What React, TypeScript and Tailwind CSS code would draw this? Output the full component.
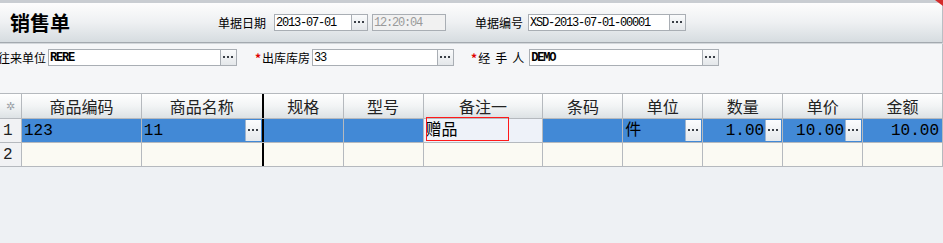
import React from 'react';

const cjk = "font-['Noto_Sans_CJK_SC',sans-serif]";
const mono = "font-['Liberation_Mono','Noto_Sans_CJK_SC',monospace]";

const Dots: React.FC = () => (
  <svg width="11" height="3" viewBox="0 0 11 3">
    <rect x="0" y="0" width="2" height="2" fill="#3a3f46" />
    <rect x="4" y="0" width="2" height="2" fill="#3a3f46" />
    <rect x="8" y="0" width="2" height="2" fill="#3a3f46" />
  </svg>
);

const PickButton: React.FC = () => (
  <div className="-ml-px flex h-[17px] w-[17px] items-center justify-center border border-[#a9aeb4] bg-gradient-to-b from-[#fafbfc] to-[#e4e7ea]">
    <Dots />
  </div>
);

const Field: React.FC<{ value: string; width: string; bold?: boolean; button?: boolean; gray?: boolean }> = ({
  value,
  width,
  bold,
  button = true,
  gray,
}) => (
  <div className="flex items-center">
    <div
      className={`flex h-[17px] items-center overflow-hidden whitespace-nowrap border border-[#a9aeb4] px-[1px] text-[12px] ${width} ${
        gray ? 'bg-[#f1f1f1] text-[#9a9a9a]' : 'bg-white text-black'
      } ${bold ? 'font-bold' : ''} ${mono} tracking-[-1.2px]`}
    >
      {value}
    </div>
    {button && <PickButton />}
  </div>
);

const Label: React.FC<{ text: string; required?: boolean; className?: string }> = ({ text, required, className = '' }) => (
  <div className={`flex items-center whitespace-pre text-[12px] text-black ${cjk} ${className}`}>
    {required && <span className="mr-[1px] text-[12px] font-bold text-[#e00000]">*</span>}
    {text}
  </div>
);

type Col = { title: string; w: string; right?: string };

const cols: Col[] = [
  { title: '商品编码', w: 'w-[120px]' },
  { title: '商品名称', w: 'w-[122px]', right: 'border-r-2 border-r-black' },
  { title: '规格', w: 'w-[80px]' },
  { title: '型号', w: 'w-[80px]' },
  { title: '备注一', w: 'w-[120px]' },
  { title: '条码', w: 'w-[80px]' },
  { title: '单位', w: 'w-[80px]' },
  { title: '数量', w: 'w-[80px]' },
  { title: '单价', w: 'w-[80px]' },
  { title: '金额', w: 'w-[80px]' },
];

const CellButton: React.FC = () => (
  <div className="absolute right-[1px] top-[1px] bottom-[1px] flex w-[16px] items-center justify-center border-l border-[#9fb4cc] bg-gradient-to-b from-[#fbfcfd] to-[#e6e9ec]">
    <Dots />
  </div>
);

const row1: { text: string; align?: string; button?: boolean; edit?: boolean }[] = [
  { text: '123' },
  { text: '11', button: true },
  { text: '' },
  { text: '' },
  { text: '赠品', edit: true },
  { text: '' },
  { text: '件', button: true },
  { text: '1.00', align: 'justify-end pr-[18px]', button: true },
  { text: '10.00', align: 'justify-end pr-[18px]', button: true },
  { text: '10.00', align: 'justify-end pr-[3px]' },
];

export default function App() {
  return (
    <div className="relative h-[243px] w-[943px] overflow-hidden bg-[#eef1f4]">
      {/* window strip */}
      <div className="h-[3px] bg-[#c9cdd2]" />
      <svg className="absolute right-0 top-0" width="10" height="6" viewBox="0 0 10 6">
        <path d="M2 0 L10 0 L10 6 Z" fill="#d42a2a" />
      </svg>

      {/* title band */}
      <div className="flex h-[39px] items-center border-r border-[#b9bec4] bg-gradient-to-b from-[#fdfdfd] via-[#eef0f2] to-[#d6dce0]">
        <div className={`ml-[10px] w-[60px] text-[20px] font-bold leading-none text-black ${cjk}`}>销售单</div>
        <Label text="单据日期" className="ml-[148px] w-[48px]" />
        <div className="ml-[8px]">
          <Field value="2013-07-01" width="w-[78px]" />
        </div>
        <div className="ml-[4px]">
          <Field value="12:20:04" width="w-[74px]" button={false} gray />
        </div>
        <Label text="单据编号" className="ml-[29px] w-[48px]" />
        <div className="ml-[5px]">
          <Field value="XSD-2013-07-01-00001" width="w-[142px]" />
        </div>
      </div>
      <div className="h-px border-r border-[#b9bec4] bg-[#a3a9af]" />
      <div className="h-px bg-[#d3d7db]" />

      {/* form area */}
      <div className="h-[49px] border-r border-[#b9bec4] bg-[#f5f6f8] pt-[5px]">
        <div className="flex h-[17px] items-center">
          <Label text="往来单位" className="ml-[-2px] w-[48px]" />
          <div className="ml-[2px]">
            <Field value="RERE" width="w-[173px]" bold />
          </div>
          <Label text="出库库房" required className="ml-[18px]" />
          <div className="ml-[2px]">
            <Field value="33" width="w-[126px]" />
          </div>
          <div className={`ml-[17px] flex items-center text-[12px] text-black ${cjk}`}>
            <span className="mr-[1px] font-bold text-[#e00000]">*</span>
            <span className="flex w-[46px] justify-between">
              <span>经</span>
              <span>手</span>
              <span>人</span>
            </span>
          </div>
          <div className="ml-[5px]">
            <Field value="DEMO" width="w-[174px]" bold />
          </div>
        </div>
      </div>

      {/* grid */}
      <div className="relative border-t border-[#b5b9be] bg-[#fbfaf3]">
        <div className="flex h-[25px] border-b border-[#b5b9be] bg-gradient-to-b from-[#ffffff] via-[#f2f4f5] to-[#dde2e5]">
          <div className="flex w-[22px] items-center justify-center border-r border-[#b5b9be] text-[11px] text-[#9aa0a6]">✲</div>
          {cols.map((c) => (
            <div
              key={c.title}
              className={`flex items-center justify-center border-r border-[#b5b9be] text-[16px] text-[#222] ${cjk} ${c.w} ${c.right ?? ''}`}
            >
              {c.title}
            </div>
          ))}
        </div>

        <div className="flex h-[24px] border-b border-[#b5b9be]">
          <div className={`flex w-[22px] items-center border-r border-[#b5b9be] bg-[#f1f2f4] pl-[3px] text-[16px] text-[#222] ${mono}`}>1</div>
          {cols.map((c, i) => {
            const d = row1[i];
            return (
              <div
                key={c.title}
                className={`relative flex items-center overflow-hidden whitespace-nowrap border-r border-[#b5b9be] pl-[2px] text-[16px] text-black ${mono} ${c.w} ${c.right ?? ''} ${
                  d.edit ? 'bg-[#eef2f9]' : 'bg-[#4289d6]'
                } ${d.align ?? ''}`}
              >
                {d.text}
                {d.button && <CellButton />}
              </div>
            );
          })}
        </div>

        <div className="flex h-[24px] border-b border-[#b5b9be]">
          <div className={`flex w-[22px] items-center border-r border-[#b5b9be] bg-[#f1f2f4] pl-[3px] text-[16px] text-[#222] ${mono}`}>2</div>
          {cols.map((c) => (
            <div key={c.title} className={`border-r border-[#b5b9be] ${c.w} ${c.right ?? ''}`} />
          ))}
        </div>

        {/* edit focus box */}
        <div className="pointer-events-none absolute left-[426px] top-[23px] h-[24px] w-[83px] border border-[#ff1a1a]" />
      </div>
    </div>
  );
}
